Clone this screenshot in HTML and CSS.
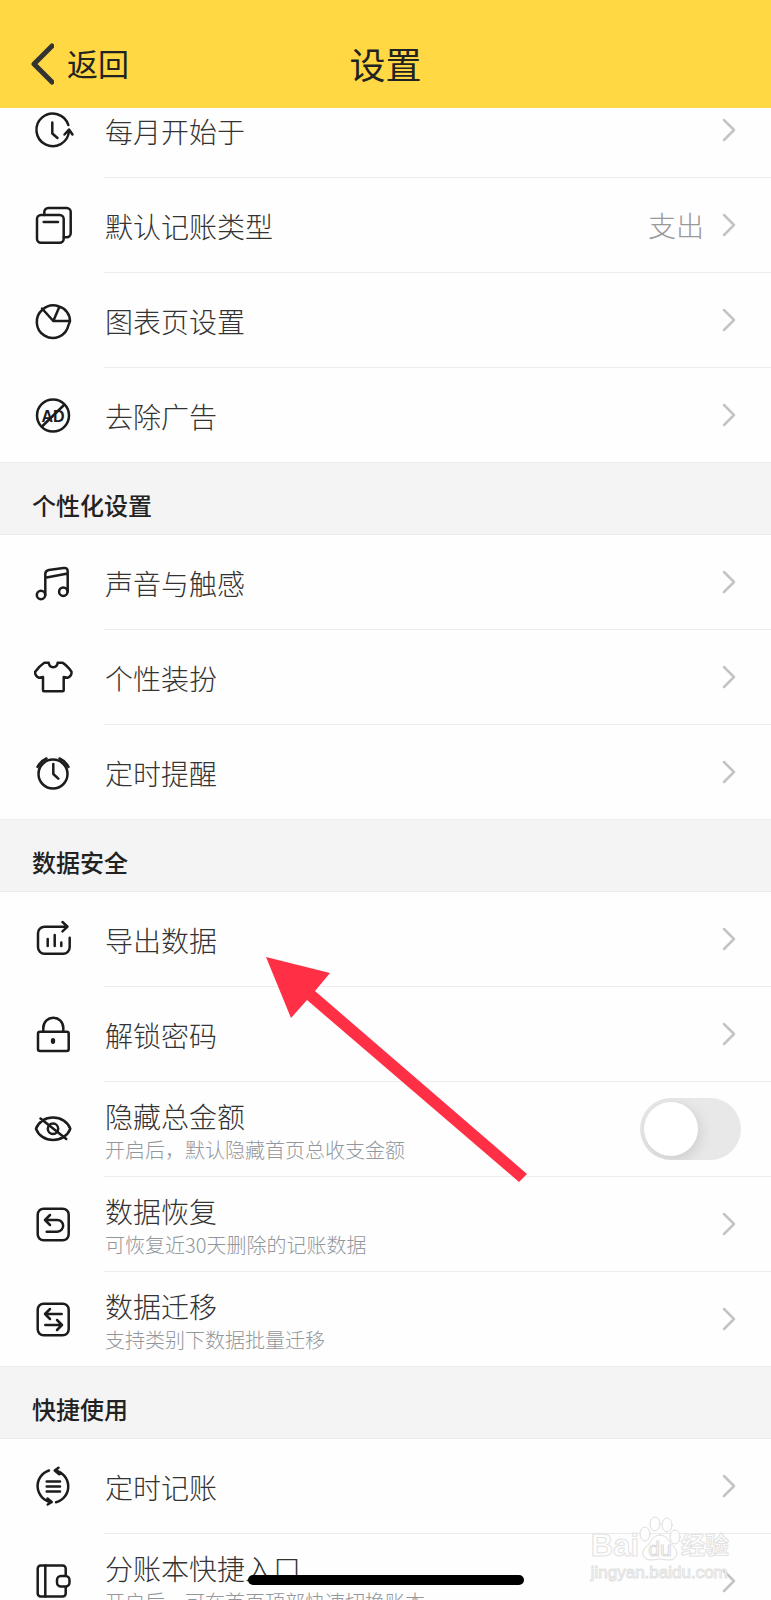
FILE: index.html
```html
<!DOCTYPE html>
<html lang="zh-CN">
<head>
    <meta charset="UTF-8">
    <meta name="viewport" content="width=device-width, initial-scale=1">
    <title>设置</title>
    <link rel="stylesheet" href="styles.css">
</head>
<body>
    <div class="app">
        <header class="navbar">
            <a class="back" href="#">
                <svg width="24" height="44" viewBox="0 0 24 44"><path d="M22 5 4 23l18 18"/></svg>
                <span>返回</span>
            </a>
            <h1>设置</h1>
        </header>

        <main class="settings">
            <ul class="group scrolled">
                <li><a class="row" href="#">
                    <svg class="icon" viewBox="0 0 44 44"><path d="M37.3 17A16.300 16.300 0 1 0 38 23M33.500 26.500 38 21.500l3.500 5M21.300 14.500v11l5.200 4.500"/></svg>
                    <span class="label">每月开始于</span>
                    <svg class="chevron" viewBox="0 0 14 24"><path d="M2 2l10 10L2 22"/></svg>
                </a></li>
                <li><a class="row" href="#">
                    <svg class="icon" viewBox="0 0 44 44"><path d="M13.3 12V9a4 4 0 0 1 4-4h18.4a4 4 0 0 1 4 4v21.3a4 4 0 0 1-4 4h-3M12.7 19H27"/><rect x="6" y="12" width="26.7" height="27.7" rx="4"/></svg>
                    <span class="label">默认记账类型</span>
                    <span class="value">支出</span>
                    <svg class="chevron" viewBox="0 0 14 24"><path d="M2 2l10 10L2 22"/></svg>
                </a></li>
                <li><a class="row" href="#">
                    <svg class="icon" viewBox="0 0 44 44"><path d="M37.5 27A16 16 0 1 1 11.7 11.5 16 16 0 0 1 28 8.5a15 15 0 0 1 11 14.5H22.3L11 10.5M22.3 23l6-14M39 23a16 16 0 0 1-1.5 4"/></svg>
                    <span class="label">图表页设置</span>
                    <svg class="chevron" viewBox="0 0 14 24"><path d="M2 2l10 10L2 22"/></svg>
                </a></li>
                <li><a class="row" href="#">
                    <svg class="icon" viewBox="0 0 44 44"><circle cx="22" cy="22.500" r="16"/><path d="M33 12 11 33.500"/><text x="22" y="28.500" text-anchor="middle">AD</text></svg>
                    <span class="label">去除广告</span>
                    <svg class="chevron" viewBox="0 0 14 24"><path d="M2 2l10 10L2 22"/></svg>
                </a></li>
            </ul>

            <h2>个性化设置</h2>
            <ul class="group">
                <li><a class="row" href="#">
                    <svg class="icon" viewBox="0 0 44 44"><circle cx="10" cy="35" r="4.2"/><circle cx="32.3" cy="31.7" r="4.2"/><path d="M14.3 35V14c0-2.500 1-3.500 3.500-4L32.500 8c2.700-.4 4.200.6 4.200 3.500v20.200M14.300 17.700l22.400-4.200"/></svg>
                    <span class="label">声音与触感</span>
                    <svg class="chevron" viewBox="0 0 14 24"><path d="M2 2l10 10L2 22"/></svg>
                </a></li>
                <li><a class="row" href="#">
                    <svg class="icon" viewBox="0 0 44 44"><path d="M17.700 7.700c.6 6 8.400 6 9 0h4.600c4 2.300 6.500 5.300 9.200 9 .5 2.600-1.500 5.600-3.800 6l-4-.7v13.300a1 1 0 0 1-1 1H13a1 1 0 0 1-1-1V22l-4 .7c-2.300-.4-4.300-3.400-3.800-6C7 13 9.700 10 13.300 7.700z"/></svg>
                    <span class="label">个性装扮</span>
                    <svg class="chevron" viewBox="0 0 14 24"><path d="M2 2l10 10L2 22"/></svg>
                </a></li>
                <li><a class="row" href="#">
                    <svg class="icon" viewBox="0 0 44 44"><circle cx="22" cy="24" r="14.500"/><path d="M22.300 14v10l5 4.700M6.500 17a18 18 0 0 1 9-8.500M28.500 8.500a18 18 0 0 1 9 8.500"/></svg>
                    <span class="label">定时提醒</span>
                    <svg class="chevron" viewBox="0 0 14 24"><path d="M2 2l10 10L2 22"/></svg>
                </a></li>
            </ul>

            <h2>数据安全</h2>
            <ul class="group">
                <li><a class="row" href="#">
                    <svg class="icon" viewBox="0 0 44 44"><path d="M36 9.700H13.500a6.500 6.500 0 0 0-6.500 6.500v14a6.500 6.500 0 0 0 6.500 6.500h18.700a6.500 6.500 0 0 0 6.500-6.500v-9.500M31.500 5l5 4.700-5 4.600M16.700 22v7M23.700 18v11M30.300 25.500V29"/></svg>
                    <span class="label">导出数据</span>
                    <svg class="chevron" viewBox="0 0 14 24"><path d="M2 2l10 10L2 22"/></svg>
                </a></li>
                <li><a class="row" href="#">
                    <svg class="icon" viewBox="0 0 44 44"><rect x="7" y="19.700" width="30.700" height="19.300" rx="2"/><path d="M12.300 19.700V16a10 10.300 0 0 1 20 0v3.700"/><ellipse class="solid" cx="22" cy="29" rx="2.200" ry="3"/></svg>
                    <span class="label">解锁密码</span>
                    <svg class="chevron" viewBox="0 0 14 24"><path d="M2 2l10 10L2 22"/></svg>
                </a></li>
                <li><div class="row">
                    <svg class="icon" viewBox="0 0 44 44"><path d="M5 21.700C7.500 15 14 10.500 22 10.500S36.800 15 39.300 21.700C36.800 28.500 30 33 22 33S7.500 28.500 5 21.700zM9.500 11.500 35.300 32"/><circle cx="22" cy="21.700" r="5.200"/></svg>
                    <label class="label" for="hideTotal">隐藏总金额<small>开启后，默认隐藏首页总收支金额</small></label>
                    <input class="switch" type="checkbox" id="hideTotal">
                </div></li>
                <li><a class="row" href="#">
                    <svg class="icon" viewBox="0 0 44 44"><rect x="6.700" y="6.700" width="31" height="31.600" rx="6"/><path d="M19 13l-5 5 5 5M14 18h12.300a5.800 5.800 0 0 1 0 11.700H15.700"/></svg>
                    <span class="label">数据恢复<small>可恢复近30天删除的记账数据</small></span>
                    <svg class="chevron" viewBox="0 0 14 24"><path d="M2 2l10 10L2 22"/></svg>
                </a></li>
                <li><a class="row" href="#">
                    <svg class="icon" viewBox="0 0 44 44"><rect x="6.700" y="6.700" width="31" height="31.600" rx="6"/><path d="M19 12l-5 5 5 5M14 17h16.700M26 23l5 5-5 5M31 28H14.300"/></svg>
                    <span class="label">数据迁移<small>支持类别下数据批量迁移</small></span>
                    <svg class="chevron" viewBox="0 0 14 24"><path d="M2 2l10 10L2 22"/></svg>
                </a></li>
            </ul>

            <h2>快捷使用</h2>
            <ul class="group">
                <li><a class="row" href="#">
                    <svg class="icon" viewBox="0 0 44 44"><path d="M18 6.500a16.300 16.300 0 0 0 2.700 31.700M16.500 34.500l4.200 3.500-4 2.500M25 38.300A16.300 16.300 0 0 0 24 6.500M27.500 3.700 23.700 6.500l4.500 3.800M15.700 17.500H29M15.700 22.500H29M15.700 27.500H29"/></svg>
                    <span class="label">定时记账</span>
                    <svg class="chevron" viewBox="0 0 14 24"><path d="M2 2l10 10L2 22"/></svg>
                </a></li>
                <li><a class="row" href="#">
                    <svg class="icon" viewBox="0 0 44 44"><rect x="6.700" y="6.500" width="28" height="31" rx="3"/><path d="M14.300 6.500v31"/><rect class="buckle" x="26" y="17" width="12.500" height="10.500" rx="4"/></svg>
                    <span class="label">分账本快捷入口<small>开启后，可在首页顶部快速切换账本</small></span>
                    <svg class="chevron" viewBox="0 0 14 24"><path d="M2 2l10 10L2 22"/></svg>
                </a></li>
            </ul>
        </main>

        <svg class="pointer" width="262" height="226" viewBox="0 0 262 226"><path d="M0 0 64 16 49 34 261 217 253 225 41 43 25 61z"/></svg>

        <div class="watermark">
            <div class="brand">
                <span class="bai">Bai</span>
                <svg width="42" height="46" viewBox="0 0 42 46"><ellipse cx="6" cy="18" rx="5" ry="7"/><ellipse cx="16" cy="8" rx="5" ry="7"/><ellipse cx="28" cy="9" rx="5" ry="7"/><ellipse cx="36" cy="21" rx="5" ry="7"/><path d="M21 19c8 0 9 8 14 12 6 6 2 13-5 13-4 0-6-1-9-1s-5 1-9 1c-8 0-11-8-5-13 5-4 6-12 14-12z"/><text x="21" y="40" text-anchor="middle">du</text></svg>
                <span class="jy">经验</span>
            </div>
            <div class="site">jingyan.baidu.com</div>
        </div>
        <div class="home-bar"></div>
    </div>
</body>
</html>
```
FILE: styles.css
```css
* {
    box-sizing: border-box;
}
body {
    margin: 0;
    background-color: #fefefe;
    color: #333;
    font-family: "Noto Sans CJK SC", sans-serif;
    font-weight: 300;
}
a {
    color: inherit;
    text-decoration: none;
}
svg {
    flex: none;
    fill: none;
    stroke-linecap: round;
    stroke-linejoin: round;
}
.app {
    position: relative;
    display: flex;
    flex-direction: column;
    height: 100vh;
    overflow: hidden;
}

/* top bar */
.navbar {
    display: grid;
    grid-template-columns: 1fr auto 1fr;
    align-items: center;
    flex: none;
    padding: 37px 30px 19px;
    background-color: #ffd843;
    color: #222;
}
.navbar h1 {
    margin: 0;
    font-size: 36px;
    font-weight: 400;
    line-height: 52px;
}
.back {
    display: flex;
    align-items: center;
    gap: 13px;
    font-size: 31px;
    font-weight: 400;
    line-height: 52px;
}
.back svg {
    stroke: #333;
    stroke-width: 5;
}

/* list */
.settings {
    flex: 1;
    min-height: 0;
    overflow: hidden;
}
.group {
    margin: 0;
    padding: 0;
    list-style: none;
}
.scrolled {
    margin-top: -26px;
}
h2 {
    margin: 0;
    padding: 24px 32px 11px;
    border-top: 1px solid #ececec;
    background-color: #f4f4f4;
    color: #222;
    font-size: 24px;
    font-weight: 500;
    line-height: 36px;
}
.row {
    display: flex;
    align-items: center;
    height: 95px;
    padding: 0 35px 0 31px;
    border-top: 1px solid transparent;
    background: linear-gradient(#ececec, #ececec) 104px 0 / 100% 1px no-repeat border-box;
}
.group li:first-child .row {
    background-position: 0 0;
}
.icon {
    width: 44px;
    height: 44px;
    margin-right: 30px;
    stroke: #1c1c1c;
    stroke-width: 2.5;
}
.icon text {
    fill: #1c1c1c;
    stroke: none;
    font: bold 16px "Liberation Sans", sans-serif;
}
.icon .solid {
    fill: #1c1c1c;
    stroke: none;
}
.icon .buckle {
    fill: #fefefe;
}
.label {
    flex: 1;
    padding-top: 1px;
    font-size: 28px;
    line-height: 36px;
}
.label:has(small) {
    padding-top: 4px;
}
.label small {
    display: block;
    margin-top: 2px;
    color: #92979d;
    font-size: 20px;
    line-height: 28px;
}
.value {
    margin-right: 18px;
    color: #999;
    font-size: 28px;
    line-height: 36px;
}
.chevron {
    width: 14px;
    height: 24px;
    stroke: #c4c4c4;
    stroke-width: 2.5;
}
.switch {
    appearance: none;
    flex: none;
    width: 101px;
    height: 62px;
    margin: 0 -5px 0 0;
    padding: 4px;
    border-radius: 31px;
    background-color: #e8e8e8;
    overflow: hidden;
}
.switch::before {
    content: "";
    display: block;
    width: 54px;
    height: 54px;
    border-radius: 50%;
    background-color: #fff;
    box-shadow: 2px 4px 14px rgba(0, 0, 0, 0.12);
}
.switch:checked {
    background-color: #ffd843;
}
.switch:checked::before {
    margin-left: auto;
}

/* things lying over the list */
.pointer {
    position: absolute;
    top: 957px;
    left: 266px;
    fill: #ff3045;
}
.watermark {
    position: absolute;
    right: 42px;
    bottom: 16px;
    color: #fefefe;
    -webkit-text-stroke: 1px #e2e2e2;
    font-family: "Liberation Sans", "Noto Sans CJK SC", sans-serif;
}
.brand {
    display: flex;
    align-items: flex-end;
    line-height: 32px;
}
.brand svg {
    fill: #fefefe;
    stroke: #dcdcdc;
}
.brand text {
    font-size: 21px;
}
.bai {
    font-size: 31px;
    font-weight: 700;
}
.jy {
    font-size: 24px;
    font-weight: 700;
}
.site {
    font-size: 17px;
    line-height: 22px;
}
.home-bar {
    position: absolute;
    bottom: 15px;
    left: 50%;
    width: 276px;
    height: 10px;
    border-radius: 5px;
    background-color: #000;
    transform: translateX(-50%);
}
```
